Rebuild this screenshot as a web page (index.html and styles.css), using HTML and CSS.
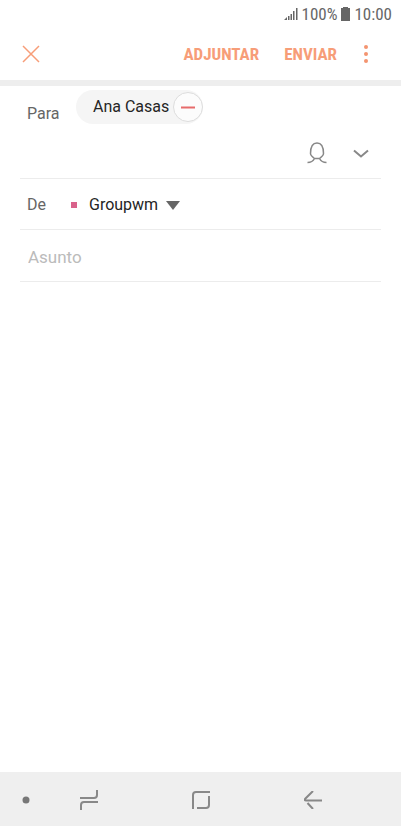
FILE: index.html
```html
<!DOCTYPE html>
<html lang="es">
<head>
<meta charset="utf-8">
<meta name="viewport" content="width=device-width, initial-scale=1">
<title>Redactar</title>
<link rel="stylesheet" href="styles.css">
</head>
<body>
<div class="status">
  <svg class="signal" width="14" height="14" viewBox="0 0 14 14" aria-hidden="true"><path d="M0 13l3-3v3zM4 9h1.500v4H4zM6.500 7H8v6H6.500zM9 4h1.500v9H9zM12 1h1.500v12H12z"/></svg>
  <span>100%</span>
  <svg class="battery" width="9" height="14" viewBox="0 0 9 14" aria-hidden="true"><path d="M2 0h5v1h2v13H0V1h2z"/></svg>
  <span>10:00</span>
</div>
<header class="toolbar">
  <button class="icon-button close" type="button" aria-label="Cerrar">
    <svg width="18" height="18" viewBox="0 0 18 18"><path d="M1 1l16 16M17 1L1 17"/></svg>
  </button>
  <button class="action" type="button">ADJUNTAR</button>
  <button class="action" type="button">ENVIAR</button>
  <button class="icon-button more" type="button" aria-label="Más opciones">
    <svg width="6" height="20" viewBox="0 0 6 20"><circle cx="3" cy="3" r="2"/><circle cx="3" cy="10" r="2"/><circle cx="3" cy="17" r="2"/></svg>
  </button>
</header>
<main class="form">
  <section class="field recipients">
    <div class="to">
      <span class="label">Para</span>
      <div class="chip">
        <span>Ana Casas</span>
        <button class="remove" type="button" aria-label="Quitar Ana Casas"><svg width="14" height="3" viewBox="0 0 14 3"><path d="M0 1.5h14"/></svg></button>
      </div>
    </div>
    <div class="tools">
      <button class="icon-button" type="button" aria-label="Contactos">
        <svg width="20" height="22" viewBox="0 0 20 22"><path d="M.5 20.500C4 20.500 6 19.500 7.500 16.500C5.500 15 3.500 13 3.500 11.500C3.500 4.500 5.500 1 10 1s6.500 3.500 6.500 10.500C16.500 13 14.500 15 12.500 16.500C14 19.500 16 20.500 19.500 20.500M7.500 16.500h5"/></svg>
      </button>
      <button class="icon-button" type="button" aria-label="Mostrar Cc y Cco">
        <svg class="chevron" width="16" height="9" viewBox="0 0 16 9"><path d="M1 1.500L8 7.500l7-6"/></svg>
      </button>
    </div>
  </section>
  <div class="field sender">
    <label class="label" for="from">De</label>
    <span class="account"></span>
    <select id="from"><option>Groupwm</option></select>
    <svg width="14" height="9" viewBox="0 0 14 9" aria-hidden="true"><path d="M0 0h14L7 9z"/></svg>
  </div>
  <div class="field subject">
    <input type="text" placeholder="Asunto" aria-label="Asunto">
  </div>
</main>
<nav class="navbar">
  <button class="icon-button dot" type="button" aria-label="Mostrar u ocultar barra"><svg width="8" height="8" viewBox="0 0 8 8"><circle cx="4" cy="4" r="3.500"/></svg></button>
  <button class="icon-button" type="button" aria-label="Recientes"><svg width="18" height="20" viewBox="0 0 18 20"><path d="M0 8h14Q17 8 17 5V0M18 12H4Q1 12 1 15v5"/></svg></button>
  <button class="icon-button" type="button" aria-label="Inicio"><svg width="18" height="18" viewBox="0 0 18 18"><path d="M1 18V4Q1 1 4 1h14M17 5v9q0 3-3 3H5"/></svg></button>
  <button class="icon-button" type="button" aria-label="Atrás"><svg width="18" height="18" viewBox="0 0 18 18"><path d="M9 0L1 8Q0 9.500 2 9.500H18M3.500 12L9 18"/></svg></button>
</nav>
</body>
</html>
```
FILE: styles.css
```css
* {
  box-sizing: border-box;
}

body {
  margin: 0;
  min-height: 100vh;
  display: flex;
  flex-direction: column;
  background: #fff;
  color: #252525;
  font: 16px/20px Roboto, sans-serif;
}

button,
select,
input {
  font: inherit;
  color: inherit;
  border: 0;
  padding: 0;
  margin: 0;
  background: none;
  appearance: none;
}

svg {
  display: block;
  flex: none;
}

.status {
  height: 28px;
  padding: 0 9px;
  display: flex;
  align-items: center;
  justify-content: flex-end;
  gap: 4px;
  color: #666;
  font-family: "Roboto Condensed", Roboto, sans-serif;
  font-size: 17px;
}

.status svg {
  fill: #666;
}

.toolbar {
  height: 58px;
  padding: 0 23px 0 15px;
  display: flex;
  align-items: center;
  gap: 25px;
  border-bottom: 6px solid #eee;
  color: #f79d78;
}

.icon-button {
  min-width: 24px;
  height: 32px;
  display: flex;
  align-items: center;
  justify-content: center;
}

.icon-button svg {
  fill: none;
  stroke: #888;
  stroke-width: 2;
}

.close {
  width: 32px;
  margin-right: auto;
}

.close svg {
  stroke: #f79d78;
  stroke-width: 1.5;
}

.action {
  font-family: "Roboto Condensed", Roboto, sans-serif;
  font-size: 17px;
  font-weight: 700;
}

.more {
  margin-left: -8px;
}

.more svg {
  fill: #f49470;
  stroke: none;
}

.form {
  flex: 1;
  padding: 0 20px;
}

.field {
  border-bottom: 1px solid #ececec;
}

.recipients {
  padding-top: 4px;
}

.to {
  display: flex;
  align-items: flex-start;
}

.label {
  width: 56px;
  padding-left: 7px;
  color: #666;
}

.to .label {
  padding-top: 14px;
}

.chip {
  height: 34px;
  padding-left: 17px;
  display: flex;
  align-items: center;
  gap: 4px;
  border-radius: 17px;
  background: #f5f5f5;
}

.remove {
  width: 30px;
  height: 30px;
  display: flex;
  align-items: center;
  justify-content: center;
  border: 1px solid #ddd;
  border-radius: 50%;
  background: #fcfcfc;
}

.remove svg {
  stroke: #e76b6b;
  stroke-width: 2;
}

.tools {
  height: 54px;
  padding: 4px 8px 0 0;
  display: flex;
  align-items: center;
  justify-content: flex-end;
  gap: 20px;
}

.tools svg {
  stroke-width: 1.5;
}

.tools .chevron {
  stroke-width: 2;
}

.sender {
  height: 51px;
  padding-top: 2px;
  display: flex;
  align-items: center;
}

.sender .label {
  width: 51px;
}

.account {
  width: 6px;
  height: 6px;
  margin-right: 12px;
  background: #d9628b;
}

.sender svg {
  margin-left: 7px;
  fill: #666;
}

.subject {
  height: 52px;
  padding-top: 2px;
  display: flex;
  align-items: center;
}

.subject input {
  width: 100%;
  height: 40px;
  padding-left: 8px;
  font-size: 17px;
}

.subject input::placeholder {
  color: #bbb;
  opacity: 1;
}

.navbar {
  height: 54px;
  padding: 2px 32px 0 0;
  display: grid;
  grid-template-columns: 33px 1fr 1fr 1fr;
  align-items: center;
  background: #efefef;
}

.navbar .dot {
  min-width: 14px;
  width: 14px;
  justify-self: end;
}

.navbar .dot svg {
  fill: #777;
  stroke: none;
}
```
